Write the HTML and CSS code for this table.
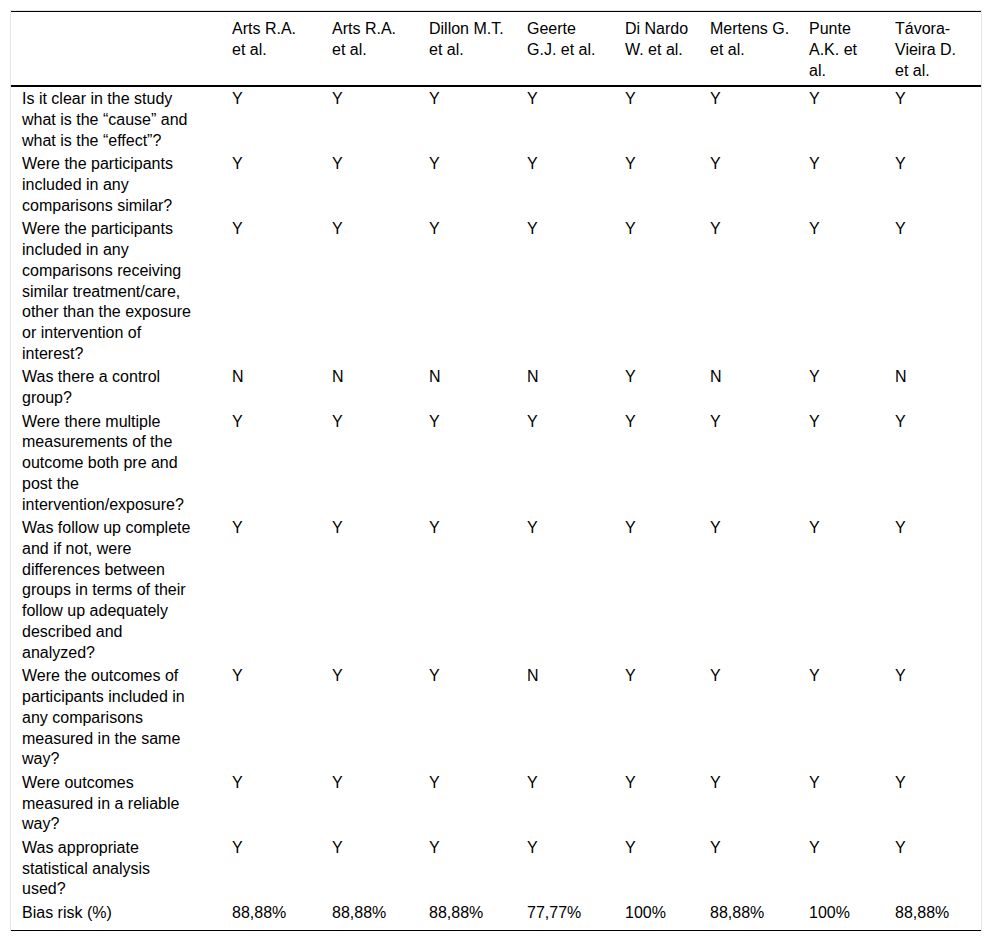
FILE: index.html
```html
<!DOCTYPE html>
<html lang="en">
<head>
<meta charset="utf-8">
<title>Risk of bias</title>
<link rel="stylesheet" href="styles.css">
</head>
<body>
<div class="frame">
<table class="bias">
<colgroup>
<col class="c-q"><col class="c-100"><col class="c-97"><col class="c-98"><col class="c-98"><col class="c-85"><col class="c-99"><col class="c-86"><col class="c-97">
</colgroup>
<thead>
<tr>
<th class="q"></th>
<th>Arts R.A. et al.</th>
<th>Arts R.A. et al.</th>
<th>Dillon M.T. et al.</th>
<th>Geerte G.J. et al.</th>
<th>Di Nardo W. et al.</th>
<th>Mertens G. et al.</th>
<th>Punte A.K. et al.</th>
<th>Távora-Vieira D. et al.</th>
</tr>
</thead>
<tbody>
<tr><td class="q">Is it clear in the study what is the “cause” and what is the “effect”?</td><td>Y</td><td>Y</td><td>Y</td><td>Y</td><td>Y</td><td>Y</td><td>Y</td><td>Y</td></tr>
<tr><td class="q">Were the participants included in any comparisons similar?</td><td>Y</td><td>Y</td><td>Y</td><td>Y</td><td>Y</td><td>Y</td><td>Y</td><td>Y</td></tr>
<tr><td class="q">Were the participants included in any comparisons receiving similar treatment/care, other than the exposure or intervention of interest?</td><td>Y</td><td>Y</td><td>Y</td><td>Y</td><td>Y</td><td>Y</td><td>Y</td><td>Y</td></tr>
<tr><td class="q">Was there a control group?</td><td>N</td><td>N</td><td>N</td><td>N</td><td>Y</td><td>N</td><td>Y</td><td>N</td></tr>
<tr><td class="q">Were there multiple measurements of the outcome both pre and post the intervention/exposure?</td><td>Y</td><td>Y</td><td>Y</td><td>Y</td><td>Y</td><td>Y</td><td>Y</td><td>Y</td></tr>
<tr><td class="q">Was follow up complete and if not, were differences between groups in terms of their follow up adequately described and analyzed?</td><td>Y</td><td>Y</td><td>Y</td><td>Y</td><td>Y</td><td>Y</td><td>Y</td><td>Y</td></tr>
<tr><td class="q">Were the outcomes of participants included in any comparisons measured in the same way?</td><td>Y</td><td>Y</td><td>Y</td><td>N</td><td>Y</td><td>Y</td><td>Y</td><td>Y</td></tr>
<tr><td class="q">Were outcomes measured in a reliable way?</td><td>Y</td><td>Y</td><td>Y</td><td>Y</td><td>Y</td><td>Y</td><td>Y</td><td>Y</td></tr>
<tr><td class="q">Was appropriate statistical analysis used?</td><td>Y</td><td>Y</td><td>Y</td><td>Y</td><td>Y</td><td>Y</td><td>Y</td><td>Y</td></tr>
<tr class="last"><td class="q">Bias risk (%)</td><td>88,88%</td><td>88,88%</td><td>88,88%</td><td>77,77%</td><td>100%</td><td>88,88%</td><td>100%</td><td>88,88%</td></tr>
</tbody>
</table>
</div>
</body>
</html>
```

FILE: styles.css
```css
html, body {
  margin: 0;
  padding: 0;
  background: #fff;
}

body {
  font-family: "Liberation Sans", Arial, sans-serif;
  font-size: 16px;
  line-height: 1.3;
  color: #000;
}

.frame {
  margin: 10px 10px 0 10px;
  border: 1px solid #e4e4e4;
  border-bottom: none;
}

.bias {
  width: 970px;
  table-layout: fixed;
  border-collapse: collapse;
  border-top: 1px solid #000;
  border-bottom: 1px solid #000;
}

.c-q { width: 210px; }
.c-100 { width: 100px; }
.c-97 { width: 97px; }
.c-98 { width: 98px; }
.c-85 { width: 85px; }
.c-99 { width: 99px; }
.c-86 { width: 86px; }

.bias th,
.bias td {
  text-align: left;
  vertical-align: top;
  font-weight: normal;
  padding: 1.8px 8px 0.8px 11px;
}

.bias thead th {
  padding-top: 7px;
  padding-bottom: 4px;
  border-bottom: 2px solid #000;
}

.bias .q {
  padding-right: 27px;
}

.bias tr.last td {
  padding-bottom: 6px;
}
```
